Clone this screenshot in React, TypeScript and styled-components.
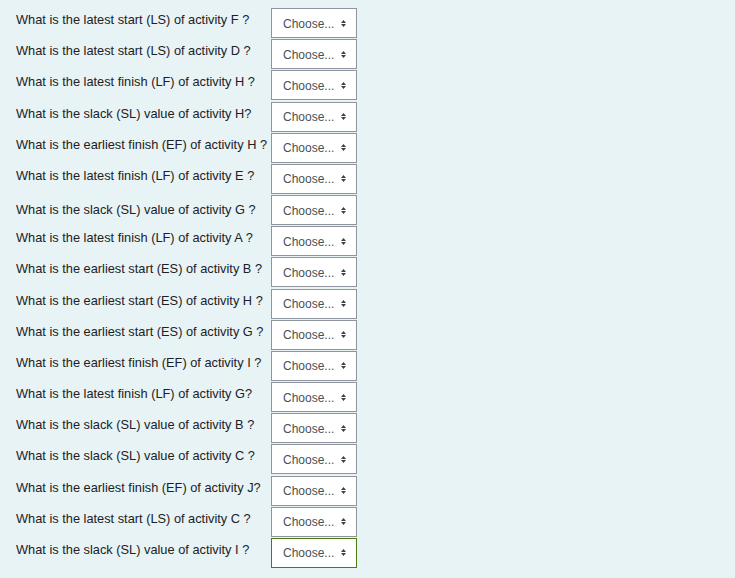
import React from "react";
import styled, { createGlobalStyle } from "styled-components";

const Global = createGlobalStyle`
  html, body { margin: 0; padding: 0; background: #e7f3f5; }
  body { font-family: "Liberation Sans", Arial, sans-serif; }
`;

const Page = styled.div`
  min-height: 578px;
  background: #e7f3f5;
  padding: 8px 0 0 16px;
  box-sizing: border-box;
`;

const Grid = styled.div`
  display: grid;
  grid-template-columns: 255px 86px;
  row-gap: 1.18px;
`;

const Question = styled.div<{ $nudge?: number }>`
  font-size: 12.8px;
  color: #1d2125;
  line-height: 15px;
  padding-top: ${(p) => 4 + (p.$nudge ?? 0)}px;
  white-space: nowrap;
`;

const Select = styled.div<{ $focused?: boolean }>`
  box-sizing: border-box;
  height: 30px;
  width: 86px;
  background: #fff;
  border: 1px solid ${(p) => (p.$focused ? "#4e7a12" : "#8f959e")};
  display: flex;
  align-items: center;
  padding: 0 0 0 11px;
  font-size: 12px;
  color: #495057;
  gap: 7px;
`;

const Label = styled.span`
  padding-top: 1px;
`;

const Arrows = () => (
  <svg width="5" height="7" viewBox="0 0 5 7" style={{ display: "block" }}>
    <path d="M0 3 L2.5 0 L5 3 Z M0 4 L2.5 7 L5 4 Z" fill="#3d4146" />
  </svg>
);

const questions: { q: string; nudge?: number }[] = [
  { q: "What is the latest start (LS) of activity F ?" },
  { q: "What is the latest start (LS) of activity D ?" },
  { q: "What is the latest finish (LF) of activity H ?" },
  { q: "What is the slack (SL) value of activity H?" },
  { q: "What is the earliest finish (EF) of activity H ?" },
  { q: "What is the latest finish (LF) of activity E ?" },
  { q: "What is the slack (SL) value of activity G ?", nudge: 3 },
  { q: "What is the latest finish (LF) of activity A ?" },
  { q: "What is the earliest start (ES) of activity B ?" },
  { q: "What is the earliest start (ES) of activity H ?" },
  { q: "What is the earliest start (ES) of activity G ?" },
  { q: "What is the earliest finish (EF) of activity I ?" },
  { q: "What is the latest finish (LF) of activity G?" },
  { q: "What is the slack (SL) value of activity B ?" },
  { q: "What is the slack (SL) value of activity C ?" },
  { q: "What is the earliest finish (EF) of activity J?" },
  { q: "What is the latest start (LS) of activity C ?" },
  { q: "What is the slack (SL) value of activity I ?" },
];

export default function App() {
  return (
    <>
      <Global />
      <Page>
        <Grid>
          {questions.map((item, i) => (
            <React.Fragment key={i}>
              <Question $nudge={item.nudge}>{item.q}</Question>
              <Select $focused={i === questions.length - 1}>
                <Label>Choose...</Label>
                <Arrows />
              </Select>
            </React.Fragment>
          ))}
        </Grid>
      </Page>
    </>
  );
}
